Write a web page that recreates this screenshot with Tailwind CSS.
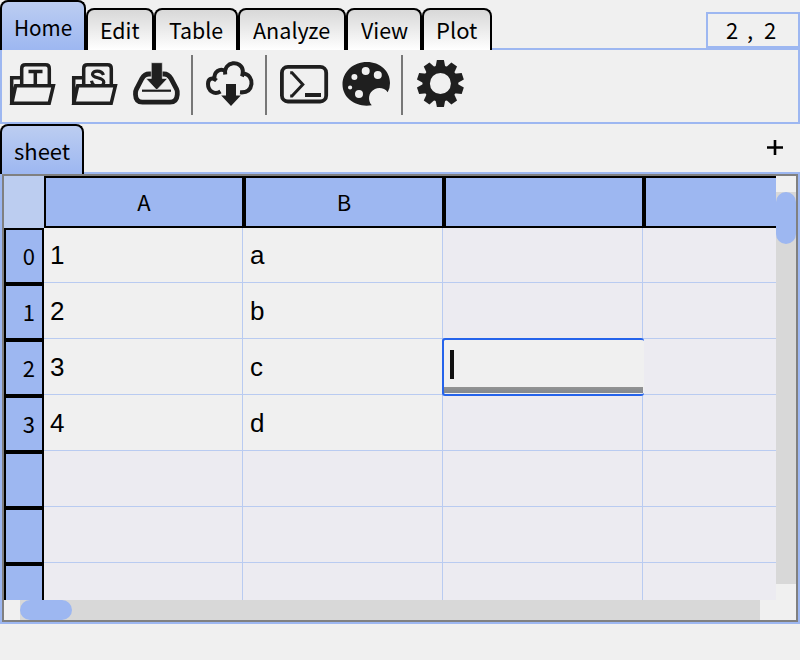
<!DOCTYPE html>
<html lang="en">
<head>
<meta charset="utf-8">
<title>Sheet</title>
<script src="https://cdn.jsdelivr.net/npm/@tailwindcss/browser@4"></script>
</head>
<body class="w-[800px] h-[660px] overflow-hidden bg-[#f0f0f0] text-black text-[22px] font-['Noto_Sans_CJK_JP',sans-serif]">
<header class="relative z-10 flex h-12 items-end">
  <nav class="flex h-[50px] -mb-[2px] items-end text-[22px] leading-[30px]">
    <div class="w-[86px] h-[50px] pt-[9px] pl-3 border-2 border-b-0 border-black rounded-t-lg bg-linear-to-b from-[#bccdf1] to-[#9db7f1]"><span class="inline-block origin-left scale-x-[0.94]">Home</span></div>
    <div class="w-[68px] h-[42px] pt-1 pl-3 border-2 border-b-0 border-black rounded-t-lg bg-linear-to-b from-[#d8d8d8] to-white"><span class="inline-block origin-left scale-x-[0.97]">Edit</span></div>
    <div class="w-[84px] h-[42px] pt-1 pl-[13px] border-2 border-b-0 border-black rounded-t-lg bg-linear-to-b from-[#d8d8d8] to-white"><span class="inline-block origin-left scale-x-[0.97]">Table</span></div>
    <div class="w-[108px] h-[42px] pt-1 pl-[13px] border-2 border-b-0 border-black rounded-t-lg bg-linear-to-b from-[#d8d8d8] to-white"><span class="inline-block origin-left scale-x-[0.98]">Analyze</span></div>
    <div class="w-[76px] h-[42px] pt-1 pl-[13px] border-2 border-b-0 border-black rounded-t-lg bg-linear-to-b from-[#d8d8d8] to-white"><span class="inline-block origin-left scale-x-[0.97]">View</span></div>
    <div class="w-[70px] h-[42px] pt-1 pl-3 border-2 border-b-0 border-black rounded-t-lg bg-linear-to-b from-[#d8d8d8] to-white"><span class="inline-block origin-left">Plot</span></div>
  </nav>
  <div class="ml-auto flex w-[94px] h-9 items-center pb-[2px] pl-[18px] border-2 border-[#9db7f1] leading-none"><span class="w-[21px]">2</span><span class="w-[17px]">,</span><span>2</span></div>
</header>
<section class="flex h-[76px] border-2 border-[#9db7f1] pl-[6px] pt-[5px] text-[#1f1f1f]">
  <svg class="w-[50px] h-[60px] mr-3 shrink-0" viewBox="8 55 50 60" fill="none" stroke="currentColor" stroke-width="3.500"><path d="M11.700 104V77.700H20M21.700 85V68.500Q21.700 64.800 25.400 64.800H45.600Q49.300 64.800 49.300 68.500V85M28.500 71.500H42.500M35.300 71.500V85M15.700 85.700H53.400L49.200 103.300H11.800Z"/></svg>
  <svg class="w-[50px] h-[60px] mr-3 shrink-0" viewBox="8 55 50 60" fill="none" stroke="currentColor" stroke-width="3.500"><path d="M11.700 104V77.700H20M21.700 85V68.500Q21.700 64.800 25.400 64.800H45.600Q49.300 64.800 49.300 68.500V85M15.700 85.700H53.400L49.200 103.300H11.800Z"/><path stroke-width="3.200" d="M41.500 75C39.500 69.700 30.500 70 30.500 74.300C30.500 79 41.800 76.500 41.800 82.300Q41.600 84 40.500 85M29.500 80.800Q30 84 32 85"/></svg>
  <svg class="w-[50px] h-[60px] mr-[9px] shrink-0" viewBox="132 55 50 60" fill="none" stroke="currentColor"><path stroke-width="4.800" d="M149 74H164Q168.300 74 171 78.500L176.600 89Q177.600 91 177.300 94.500Q176.700 102.200 170 102.200H142.500Q135.700 102.200 135.500 94.500Q135.300 91 136.500 89L142 78.500Q144.500 74 149 74Z"/><path stroke-width="2.200" d="M142 90.700H171"/><path fill="currentColor" stroke="#f0f0f0" stroke-width=".6" d="M151.300 62.700H162.300V78.500H167.500L156.700 90L146 78.500H151.300Z"/></svg>
  <div class="w-[2px] h-[60px] bg-[#777777] shrink-0"></div>
  <svg class="w-[50px] h-[60px] ml-[12px] mr-[10px] shrink-0" viewBox="205 55 50 60" fill="none" stroke="currentColor" stroke-width="4"><path d="M220.500 91.500C214 95.500 208 90.500 208 84C208 79 212 76.500 216.500 80.500M214.500 79.500C213.500 71.500 220 67.500 226 71.500M225.200 74.500C223.500 60.500 241.500 60 242.800 70.500Q243 74 242 76.500M242.500 73.500C249.500 73.500 252 80 251.500 84C250.500 91 246 92.800 240 92.300"/><path fill="currentColor" stroke="none" d="M226 84H236V95.500H240.800L231 106L221.200 95.500H226Z"/></svg>
  <div class="w-[2px] h-[60px] bg-[#777777] shrink-0"></div>
  <svg class="w-[50px] h-[60px] ml-[12px] mr-[12px] shrink-0" viewBox="279 55 50 60" fill="none" stroke="currentColor" stroke-width="3.800"><rect x="281.900" y="66.900" width="44.300" height="34.600" rx="6"/><path stroke-width="3" d="M290.200 72.800H292L302.800 84.500L292 96H290.200"/><path stroke-width="4" d="M305 95H321"/></svg>
  <svg class="w-[50px] h-[60px] mr-[10px] shrink-0" viewBox="341 55 50 60" fill="currentColor"><path fill-rule="evenodd" d="M371.800 105.200C357 108 342.500 98.500 342.500 84.500C342.500 72 353 62 367 62C380 62 390 71 390 83Q390 88.500 387.700 92.200C385 88.500 379.500 87 375 89C368 92 367.500 101 371.800 105.200ZM361.700 71A4 4 0 1 0 369.700 71A4 4 0 1 0 361.700 71ZM373.800 75A4 4 0 1 0 381.800 75A4 4 0 1 0 373.800 75ZM351.400 77A3 3 0 1 0 357.400 77A3 3 0 1 0 351.400 77ZM348 87.500A2.100 2.100 0 1 0 352.200 87.500A2.100 2.100 0 1 0 348 87.500ZM355 94A4 4 0 1 0 363 94A4 4 0 1 0 355 94Z"/></svg>
  <div class="w-[2px] h-[60px] bg-[#777777] shrink-0"></div>
  <svg class="w-[50px] h-[60px] ml-[12px] shrink-0" viewBox="-25.400 -28.500 50 60" fill="currentColor"><defs><path id="tooth" d="M-5 -16L-3.500 -23.500H3.500L5 -16Z"/></defs><circle r="14.200" fill="none" stroke="currentColor" stroke-width="7.400"/><use href="#tooth"/><use href="#tooth" transform="rotate(36)"/><use href="#tooth" transform="rotate(72)"/><use href="#tooth" transform="rotate(108)"/><use href="#tooth" transform="rotate(144)"/><use href="#tooth" transform="rotate(180)"/><use href="#tooth" transform="rotate(216)"/><use href="#tooth" transform="rotate(252)"/><use href="#tooth" transform="rotate(288)"/><use href="#tooth" transform="rotate(324)"/></svg>
</section>
<div class="relative z-10 flex h-12 items-start justify-between">
  <div class="w-[84px] h-[50px] pt-[9px] pl-3 border-2 border-b-0 border-black rounded-t-lg bg-linear-to-b from-[#bccdf1] to-[#9db7f1] leading-[30px]"><span class="inline-block origin-left">sheet</span></div>
  <svg class="w-4 h-4 mt-[16px] mr-[17px]" viewBox="0 0 16 16" stroke="black" stroke-width="2.600"><path d="M0 7.500H16M8 0V15"/></svg>
</div>
<main class="h-[452px] border-2 border-[#9db7f1]">
  <div class="grid h-full grid-cols-[772px_20px] grid-rows-[424px_20px] border-2 border-[#808080]">
    <div class="flex flex-col overflow-hidden bg-[#ecebf1]">
      <div class="flex h-[52px] shrink-0 leading-[47px] text-center">
        <div class="w-10 shrink-0 bg-[#bccdf0]"></div>
        <div class="w-[200px] shrink-0 border-2 border-black bg-[#9db7f1]">A</div>
        <div class="w-[200px] shrink-0 border-2 border-black bg-[#9db7f1]">B</div>
        <div class="w-[200px] shrink-0 border-2 border-black bg-[#9db7f1]"></div>
        <div class="w-[200px] shrink-0 border-2 border-black bg-[#9db7f1]"></div>
      </div>
      <div class="flex">
        <div id="rows" class="w-10 shrink-0 text-right leading-[51px]"></div>
        <div class="relative w-[732px] overflow-hidden">
          <div id="cells" class="grid w-[800px] -ml-px -mt-px grid-cols-[repeat(4,200px)] auto-rows-[56px] font-['Liberation_Sans',sans-serif] text-[26px] leading-[57px]"></div>
          <div class="absolute left-[398px] top-[110px] w-[202px] h-[58px] rounded-[3px] border-2 border-r-0 border-[#2563eb] bg-[#f0f0f0]">
            <div class="absolute left-[6px] top-[10px] w-1 h-[29px] bg-[#111111]"></div>
            <div class="absolute left-0 right-px bottom-[1px] h-[6px] bg-linear-to-b from-[#939392] to-[#83888f]"></div>
          </div>
        </div>
      </div>
    </div>
    <div class="pt-4"><div class="h-[392px] bg-[#d8d8d8]"><div class="h-[52px] rounded-full bg-[#9db7f1]"></div></div></div>
    <div class="pl-4"><div class="w-[740px] h-5 bg-[#d8d8d8]"><div class="w-[52px] h-5 rounded-full bg-[#9db7f1]"></div></div></div>
  </div>
</main>
<script>
const values = [["1","a"],["2","b"],["3","c"],["4","d"]];
const rows = document.getElementById("rows");
const cells = document.getElementById("cells");
for (let r = 0; r < 7; r++) {
  rows.insertAdjacentHTML("beforeend", `<div class="h-[56px] border-2 border-black bg-[#9db7f1] pr-[7px]">${r < 4 ? r : ""}</div>`);
  for (let c = 0; c < 4; c++) {
    const v = values[r] && values[r][c];
    cells.insertAdjacentHTML("beforeend", `<div class="border-r border-b border-[#b9cbf1] pl-[7px] ${v ? "bg-[#f0f0f0]" : ""}">${v || ""}</div>`);
  }
}
</script>
</body>
</html>
